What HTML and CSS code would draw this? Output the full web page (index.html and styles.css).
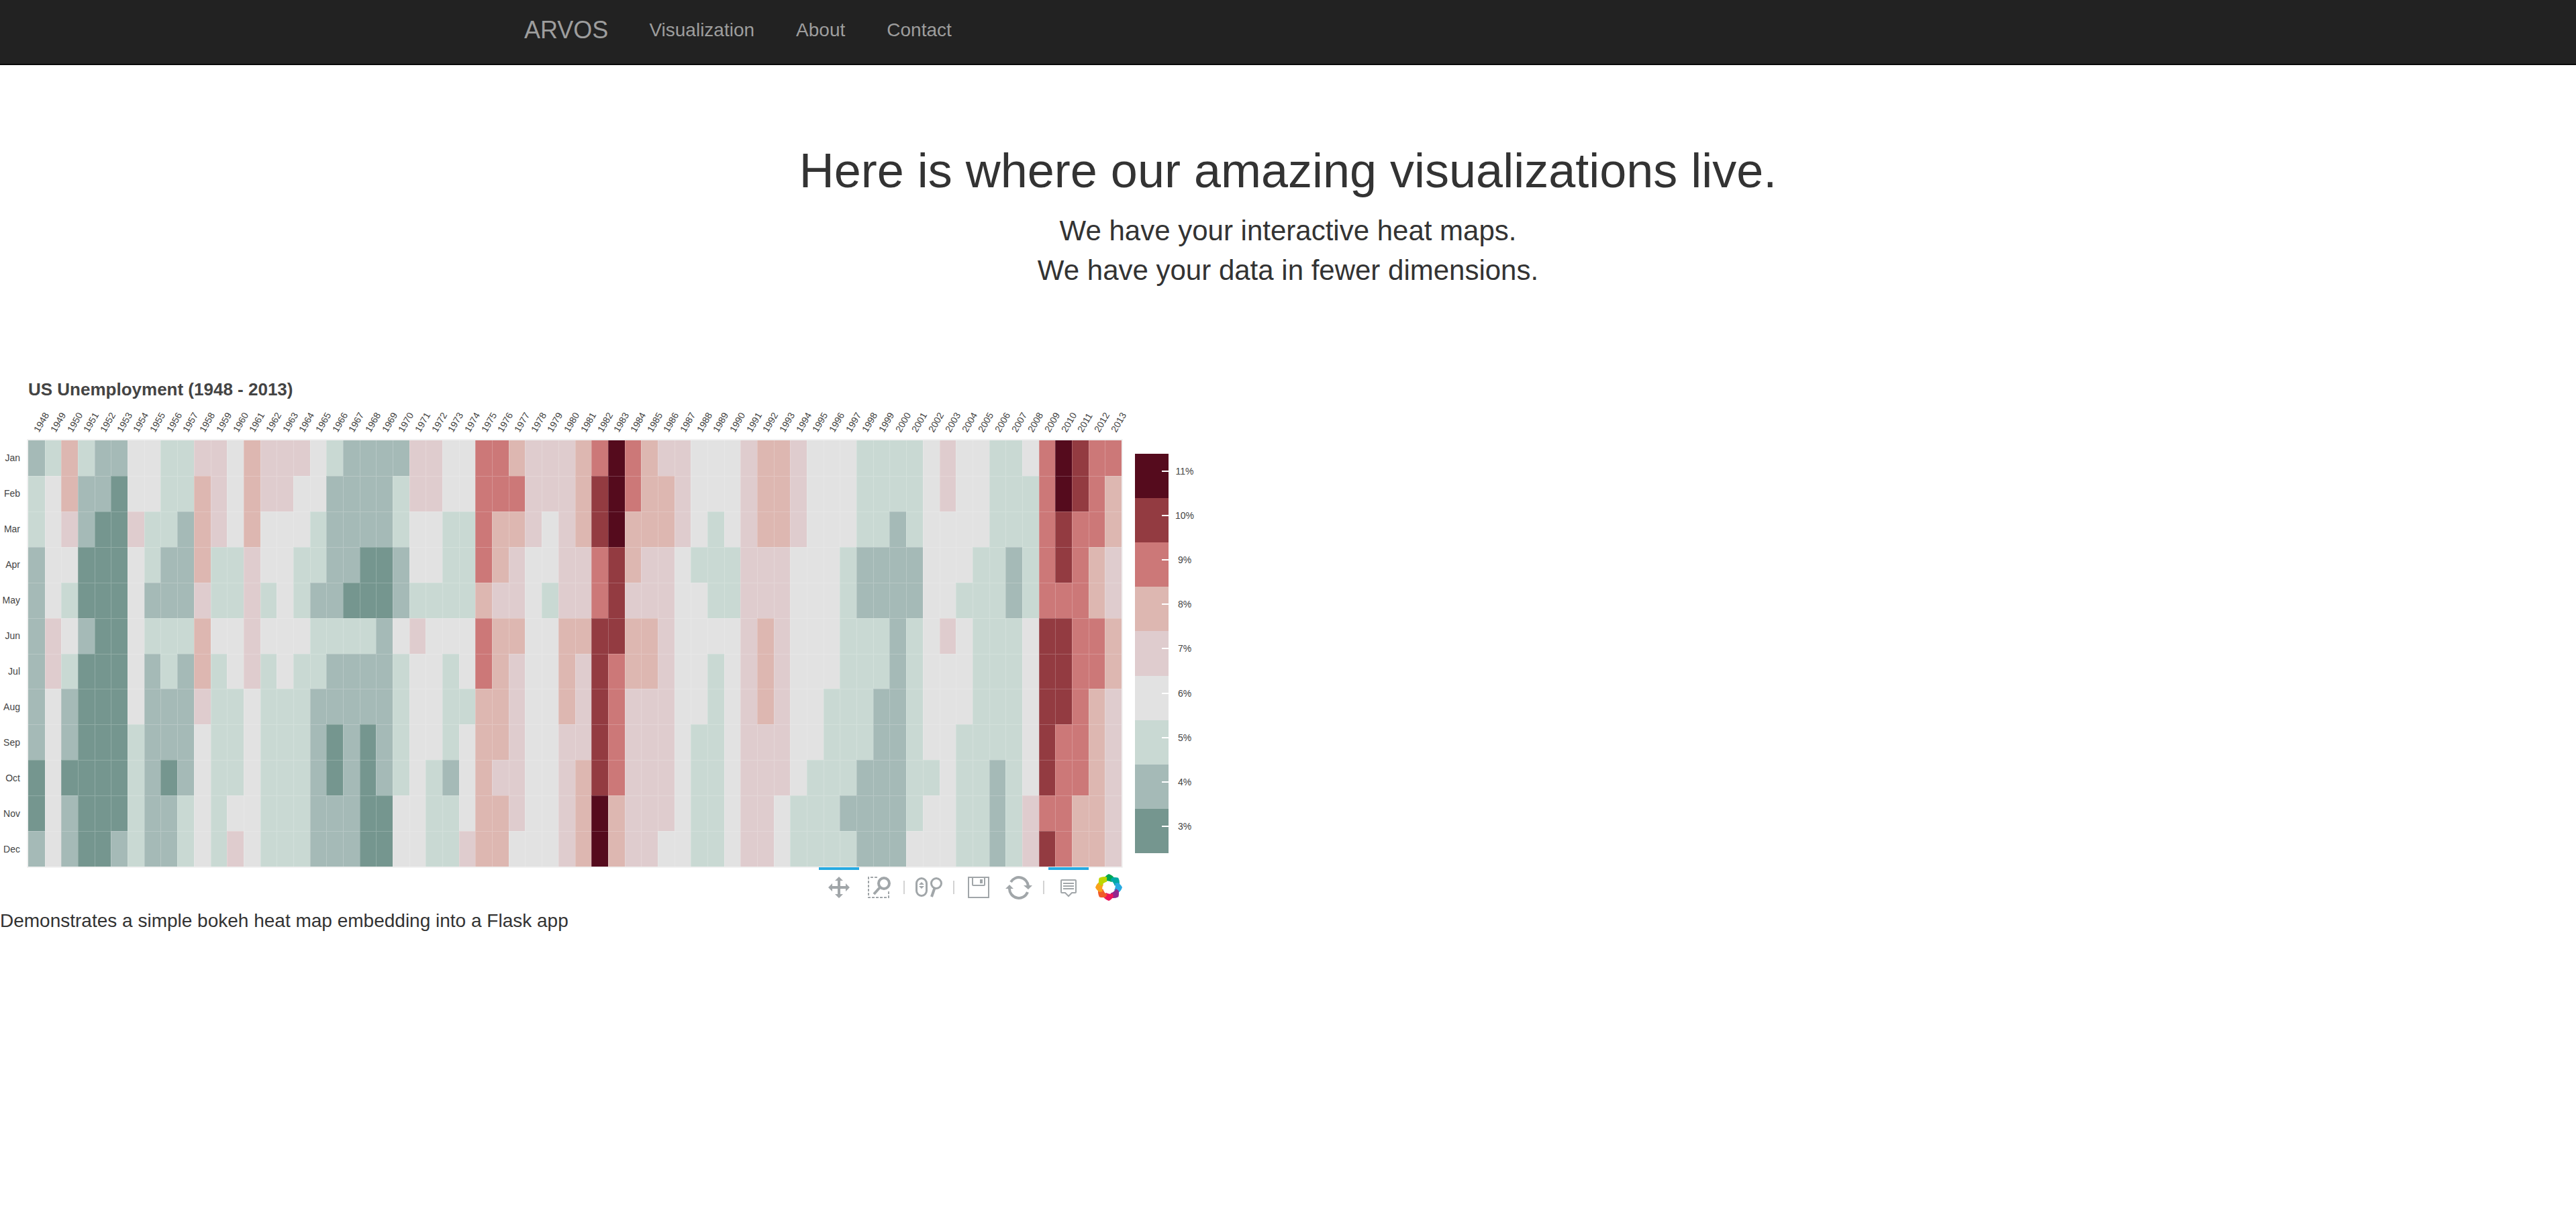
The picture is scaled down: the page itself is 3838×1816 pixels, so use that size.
FILE: index.html
```html
<!DOCTYPE html>
<html lang="en">
<head>
<meta charset="utf-8">
<title>ARVOS</title>
<meta name="viewport" content="width=device-width, initial-scale=1">
<link rel="stylesheet" href="styles.css">
</head>
<body>
<nav class="navbar">
  <div class="container">
    <a class="brand" href="#">ARVOS</a>
    <ul class="nav-links">
      <li><a href="#visualization">Visualization</a></li>
      <li><a href="#about">About</a></li>
      <li><a href="#contact">Contact</a></li>
    </ul>
  </div>
</nav>
<header class="intro">
  <h1>Here is where our amazing visualizations live.</h1>
  <p>We have your interactive heat maps.<br>We have your data in fewer dimensions.</p>
</header>
<main>
  <section class="plot" id="visualization">
    <h2 class="plot-title">US Unemployment (1948 - 2013)</h2>
    <svg class="heatmap" id="heatmap" width="1800" height="692" viewBox="0 0 1800 692" role="img" aria-label="US unemployment rate by month and year"></svg>
    <div class="toolbar">
      <button class="tool active" type="button" aria-label="Pan">
        <svg width="40" height="40" viewBox="0 0 40 40" fill="#a1a6a9"><path d="M20 4l6 6h-4v8h8v-4l6 6-6 6v-4h-8v8h4l-6 6-6-6h4v-8h-8v4l-6-6 6-6v4h8v-8h-4z"/></svg>
      </button>
      <button class="tool" type="button" aria-label="Box zoom">
        <svg width="40" height="40" viewBox="0 0 40 40" fill="none" stroke="#a1a6a9"><path stroke-width="2" d="M17 5H4v30h30v-9" stroke-dasharray="4 2"/><circle cx="27" cy="14" r="8" stroke-width="4"/><path stroke-width="4" d="M21 20L12 30"/></svg>
      </button>
      <span class="separator"></span>
      <button class="tool" type="button" aria-label="Wheel zoom">
        <svg width="40" height="40" viewBox="0 0 40 40" fill="none" stroke="#a1a6a9"><rect x="1.500" y="6.500" width="15" height="26" rx="7.500" stroke-width="3"/><path fill="#a1a6a9" stroke="none" d="M9 12l4 4H5zM5 18h8l-4 4z"/><circle cx="31" cy="14" r="7.500" stroke-width="3"/><path stroke-width="4" d="M28.500 21L24 34"/></svg>
      </button>
      <span class="separator"></span>
      <button class="tool" type="button" aria-label="Save">
        <svg width="40" height="40" viewBox="0 0 40 40" fill="none" stroke="#a1a6a9" stroke-width="2"><path d="M5 5h30v30H5zM11 5v11q0 1 1 1h16q1 0 1-1V5"/><path fill="#a1a6a9" stroke="none" d="M22 8h4v6h-4z"/></svg>
      </button>
      <button class="tool" type="button" aria-label="Reset">
        <svg width="40" height="40" viewBox="0 0 40 40" fill="none" stroke="#a1a6a9" stroke-width="4"><path d="M8 12a14 14 0 0 1 26 6M33 27A14 14 0 0 1 6 21"/><path fill="#a1a6a9" stroke="none" d="M27 17h13l-6 6zM0 22l6-6 6 6z"/></svg>
      </button>
      <span class="separator"></span>
      <button class="tool active" type="button" aria-label="Hover">
        <svg width="40" height="40" viewBox="0 0 40 40" fill="none" stroke="#a1a6a9" stroke-width="2"><path d="M10 9h20q1 0 1 1v17q0 1-1 1h-5l-5 5-5-5h-5q-1 0-1-1V10q0-1 1-1zM12 14h16M12 18h16M12 22h16"/></svg>
      </button>
      <a class="logo" href="#" aria-label="Bokeh">
        <svg width="40" height="40" viewBox="0 0 40 40">
          <defs><path id="petal" d="M13 6Q17 1 20 0Q26 2 29 7L24 12Q19 9 14 11Z"/></defs>
          <use href="#petal" fill="#00a651"/>
          <use href="#petal" fill="#00a9a5" transform="rotate(45 20 20)"/>
          <use href="#petal" fill="#27aae1" transform="rotate(90 20 20)"/>
          <use href="#petal" fill="#92278f" transform="rotate(135 20 20)"/>
          <use href="#petal" fill="#ed145b" transform="rotate(180 20 20)"/>
          <use href="#petal" fill="#f15a29" transform="rotate(225 20 20)"/>
          <use href="#petal" fill="#f9a11b" transform="rotate(270 20 20)"/>
          <use href="#petal" fill="#bed600" transform="rotate(315 20 20)"/>
        </svg>
      </a>
    </div>
  </section>
  <p class="caption">Demonstrates a simple bokeh heat map embedding into a Flask app</p>
</main>
<script src="heatmap.js"></script>
</body>
</html>
```
FILE: styles.css
```css
* { box-sizing: border-box; }

body {
  margin: 0;
  background: #fff;
  color: #333;
  font-family: "Liberation Sans", Arial, sans-serif;
  font-size: 28px;
  line-height: 40px;
}

.navbar {
  background: #222;
  border-bottom: 2px solid #080808;
}

.container {
  display: flex;
  max-width: 2340px;
  margin: 0 auto;
  padding: 25px 32px 30px;
}

.brand,
.nav-links a {
  color: #9d9d9d;
  text-decoration: none;
}

.brand {
  padding-right: 30px;
  font-size: 36px;
}

.nav-links {
  display: flex;
  margin: 0;
  padding: 0;
  list-style: none;
}

.nav-links a { padding: 0 31px; }

.intro {
  padding: 117px 30px 132px;
  text-align: center;
}

.intro h1 {
  margin: 0 0 20px;
  font-size: 72px;
  font-weight: 500;
  line-height: 80px;
}

.intro p {
  margin: 0;
  font-size: 42px;
  line-height: 59px;
}

.plot { max-width: 1800px; }

.plot-title {
  margin: 0 0 4px 42px;
  color: #444;
  font-size: 26px;
  line-height: 32px;
}

.heatmap {
  display: block;
  overflow: visible;
  font-size: 14px;
  fill: #444;
}

.years text { text-anchor: start; }
.months text { text-anchor: end; }
.scale text { text-anchor: middle; }

.gridlines {
  fill: none;
  stroke: #fff;
  stroke-opacity: 0.2;
  stroke-width: 1;
  shape-rendering: crispEdges;
}

.frame {
  fill: none;
  stroke: #e5e5e5;
  stroke-width: 1;
}

.scale-ticks {
  fill: none;
  stroke: #fff;
  stroke-width: 2;
}

.toolbar {
  display: flex;
  align-items: center;
  justify-content: flex-end;
  width: 1672px;
  height: 60px;
}

.tool {
  display: flex;
  align-items: center;
  justify-content: center;
  width: 60px;
  height: 60px;
  padding: 0;
  border: 0;
  border-top: 4px solid transparent;
  border-bottom: 4px solid transparent;
  background: none;
}

.tool.active { border-top-color: #26aae1; }

.separator {
  width: 2px;
  height: 20px;
  margin: 0 6px;
  background: #d3d3d3;
}

.logo {
  display: flex;
  margin-left: 10px;
}

.caption { margin: 0; }
```
FILE: heatmap.js
```js
const colors = ["#75968f", "#a5bab7", "#c9d9d3", "#e2e2e2", "#dfccce", "#ddb7b1", "#cc7878", "#933b41", "#550b1d"];
const months = ["Jan", "Feb", "Mar", "Apr", "May", "Jun", "Jul", "Aug", "Sep", "Oct", "Nov", "Dec"];
const firstYear = 1948;

// One string per year, one colour index per month.
const rates = `
122111111001 233334433333 554323211011 211001000000 110000000000 100000000001
334333332222 332212111111 222112211011 221112111122 455545543333 444223222222
333223322234 555444433333 443323222222 443333322222
433223222222 332212211111 211112110011 111102111111 111002110000 111001111100
122113222233 443324333333 443323333222 332223222122 332223323334
666656655555 665545555455 565445444443 444333333333 443323333333 444445554444
555445444555 677667777788 888777666655 665545544444 555445544444 455444444443
444333333333 333233332222 332223222222 333223333333 444444444444 555445554444
555444444433 444333333322 333333333222 333333322222 333222222212
222112222111 222112211111 221111111111 222112222223 333333333233 443334333333
333323332222 333222222222 222222222111 222112222222 322223333344 666667777767
887767776666 776666666655 666556655555 655445544444
`.trim().split(/\s+/);

const svg = document.getElementById("heatmap");
const left = 42, top_ = 56, right = 1671, bottom = 691;
const cellWidth = (right - left) / rates.length;
const cellHeight = (bottom - top_) / months.length;

function add(parent, name, attributes, text) {
  const node = document.createElementNS("http://www.w3.org/2000/svg", name);
  for (const key in attributes) node.setAttribute(key, attributes[key]);
  if (text) node.textContent = text;
  parent.appendChild(node);
  return node;
}

const columnX = i => Math.round(left + i * cellWidth);
const rowY = i => Math.round(top_ + i * cellHeight);

const cells = add(svg, "g", { class: "cells" });
const years = add(svg, "g", { class: "years" });
rates.forEach((year, i) => {
  [...year].forEach((level, m) => {
    add(cells, "rect", {
      x: columnX(i), y: rowY(m),
      width: columnX(i + 1) - columnX(i), height: rowY(m + 1) - rowY(m),
      fill: colors[level]
    });
  });
  const x = Math.round(left + (i + 0.5) * cellWidth) + 4;
  add(years, "text", { transform: `translate(${x} 45) rotate(-60)` }, String(firstYear + i));
});

const monthLabels = add(svg, "g", { class: "months" });
months.forEach((name, m) => add(monthLabels, "text", { x: 30, y: Math.round(top_ + (m + 0.5) * cellHeight) + 5 }, name));

let lines = "";
for (let i = 1; i < rates.length; i++) lines += `M${columnX(i)} ${top_}V${bottom}`;
for (let m = 1; m < months.length; m++) lines += `M${left} ${rowY(m)}H${right}`;
add(svg, "path", { class: "gridlines", d: lines });
add(svg, "rect", { class: "frame", x: left - 1, y: top_ - 1, width: right - left + 2, height: bottom - top_ + 2 });

// Colour scale, highest rate at the top.
const scale = add(svg, "g", { class: "scale" });
let ticks = "";
for (let i = 0; i < 9; i++) {
  const y = 76 + Math.round(i * 595 / 9);
  add(scale, "rect", { x: 1691, y, width: 50, height: 76 + Math.round((i + 1) * 595 / 9) - y, fill: colors[8 - i] });
  ticks += `M1731 ${y + 26}h10`;
  add(scale, "text", { x: 1765, y: y + 31 }, `${11 - i}%`);
}
add(svg, "path", { class: "scale-ticks", d: ticks });
```
